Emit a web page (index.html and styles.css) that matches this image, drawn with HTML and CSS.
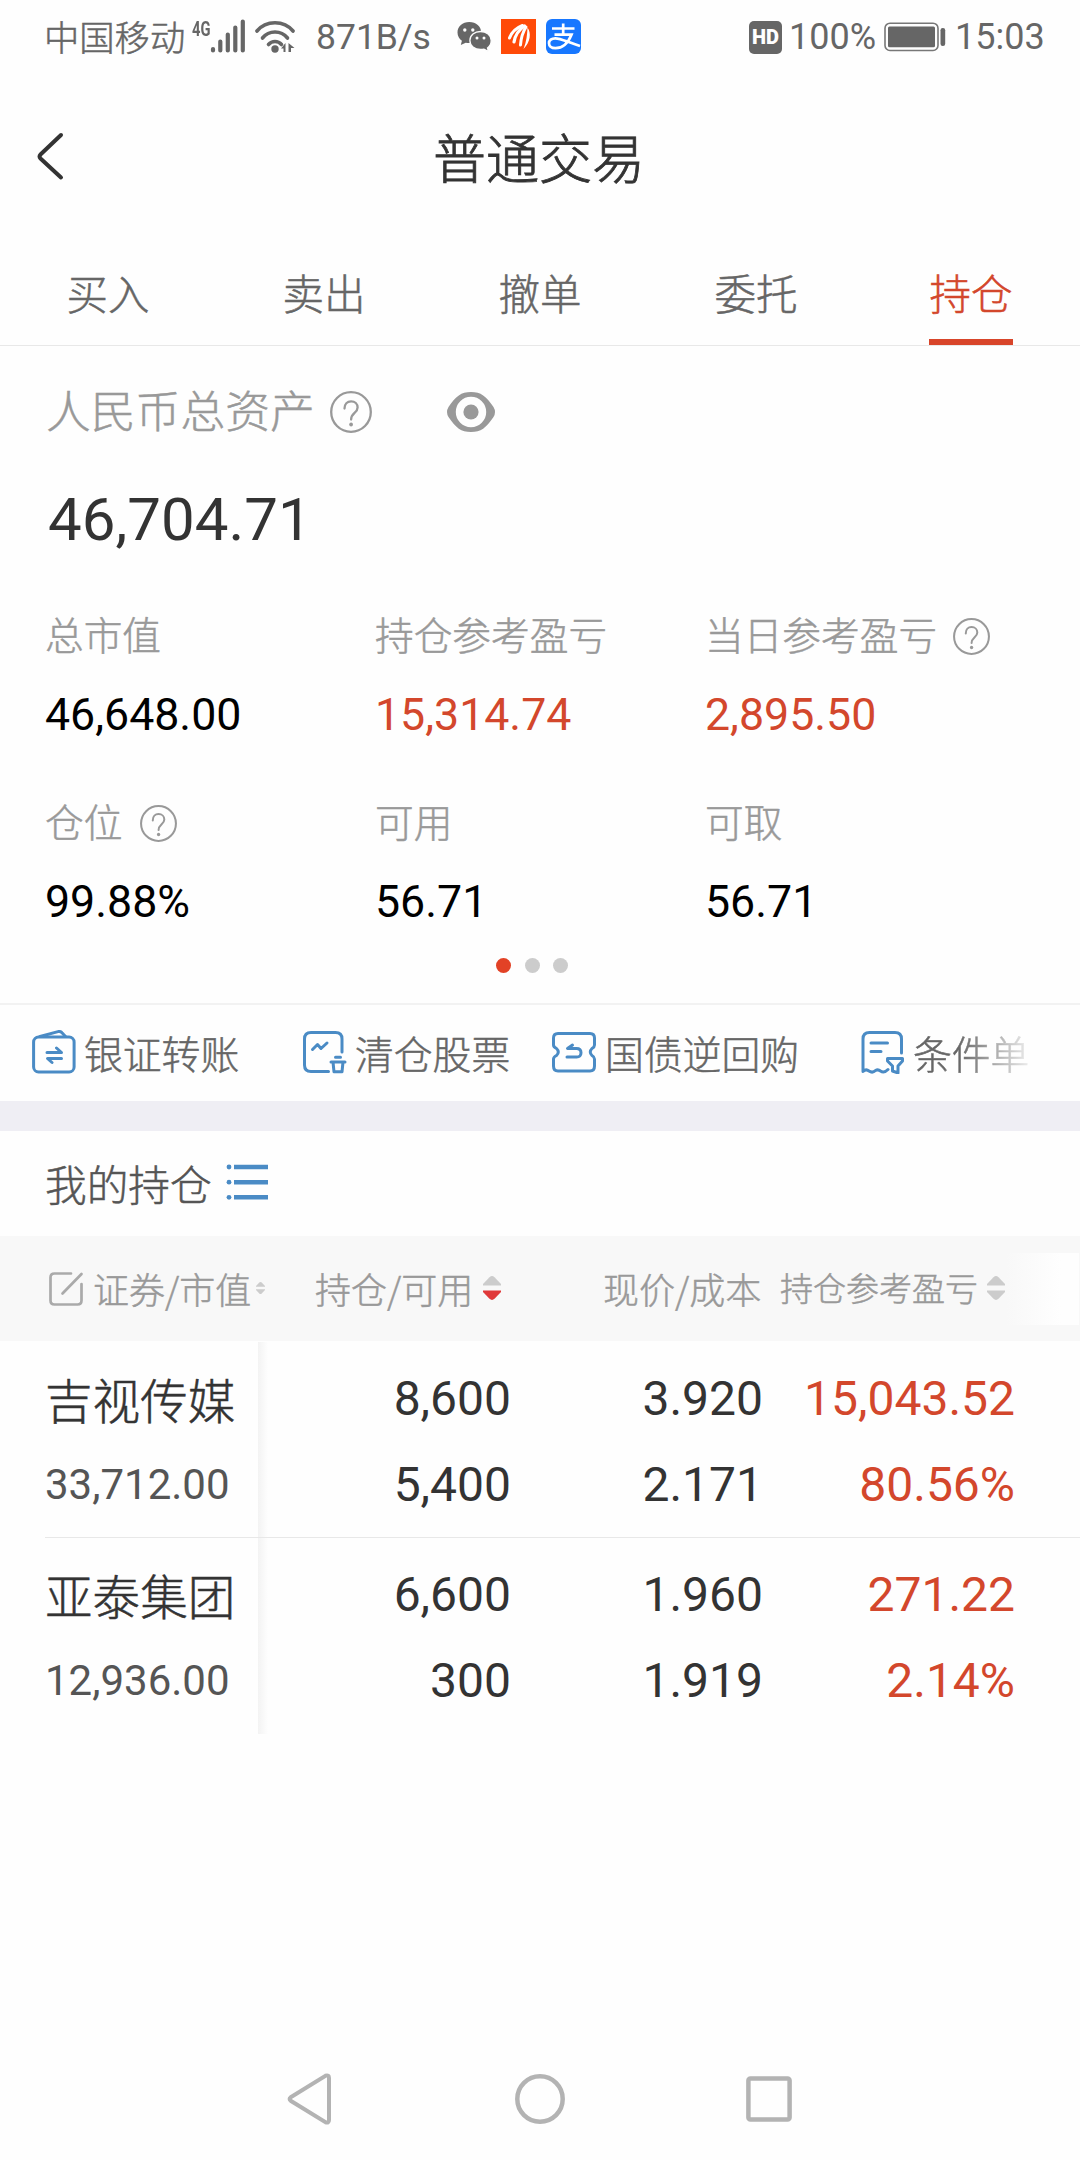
FILE: index.html
```html
<!DOCTYPE html>
<html lang="zh-CN">
<head>
<meta charset="utf-8">
<title>普通交易</title>
<link rel="stylesheet" href="styles.css">
</head>
<body>
<svg class="defs" width="0" height="0">
  <symbol id="help" viewBox="0 0 42 42">
    <g fill="none" stroke="#999" stroke-width="2.3">
      <circle cx="21" cy="21" r="19.8"/>
      <path d="M14.5 17.5c0-4.5 2.8-7.2 6.6-7.2s6.5 2.600 6.500 6.200c0 5.500-6.500 5.500-6.500 12" stroke-linecap="round"/>
    </g>
    <circle cx="21.100" cy="33.500" r="1.900" fill="#999"/>
  </symbol>
  <symbol id="sort" viewBox="0 0 18 24">
    <path class="sort-up" d="M0 9.500V8L6.500 1.200Q9 -1 11.500 1.200L18 8V9.500z"/>
    <path class="sort-down" d="M0 14.500V16L6.500 22.800Q9 25 11.500 22.800L18 16V14.500z"/>
  </symbol>
</svg>

<div class="status">
  <span class="carrier">中国移动</span>
  <span class="net">4G</span>
  <svg class="signal" width="36" height="34" viewBox="0 0 36 34"><path d="M3 31.500V30M10.300 31.500V22.500M17.800 31.500V15.500M25.300 31.500V8.500M32.800 31.500V2.500" stroke="#666" stroke-width="4.200" stroke-linecap="round"/></svg>
  <svg class="wifi" width="40" height="33" viewBox="0 0 40 33"><g fill="none" stroke="#666" stroke-width="3.600" stroke-linecap="round"><path d="M2 11C11 0 29 0 38 11"/><path d="M7.500 18C14 10 26 10 32.500 18"/><path d="M13.500 24.500C17 20.500 23 20.500 26.500 24.500"/></g><circle cx="20" cy="29" r="3.700" fill="#666"/><path d="M26 28.500L30.500 23V32H28.500V28.500zM33.500 23L39.500 28H36V32H33.500z" fill="#666"/></svg>
  <span class="speed">871B/s</span>
  <svg class="wechat" width="35" height="32" viewBox="0 0 35 32"><path d="M12.300 1C5.500 1 .5 5.500.5 11.500c0 3.600 1.800 6.300 4.400 8.300L3.800 24l4.900-2.300c1.200.3 2.400.4 3.600.4 6.800 0 11.900-4.600 11.900-10.600S19.100 1 12.300 1z" fill="#666"/><path d="M23.500 10.500c-6 0-10.600 3.900-10.600 9s4.600 9 10.600 9c1.200 0 2.400-.1 3.500-.4l4.500 2.400-1-3.500c2.300-1.700 3.700-4.500 3.700-7.500 0-5.100-4.700-9-10.700-9z" fill="#666" stroke="#fdfdfd" stroke-width="1.300"/><g fill="#fdfdfd"><circle cx="7.800" cy="9" r="1.700"/><circle cx="15.800" cy="9" r="1.700"/><circle cx="20" cy="17" r="1.500"/><circle cx="27" cy="17" r="1.500"/></g></svg>
  <svg class="appicon" width="35" height="35" viewBox="0 0 35 35"><path fill="#ff4a08" d="M0 0h35v35H0z"/><g fill="none" stroke="#fff" stroke-linecap="round"><path d="M8.500 19C10.500 13.500 15 9 21.500 6.500" stroke-width="3"/><path d="M13 23C14 17 17.500 11 23.500 7" stroke-width="3.200"/><path d="M19.500 26C20 19 21.800 13 25 8" stroke-width="3"/></g><path d="M22.500 30C25.500 23 26.300 15 26.500 8.500 30.500 14 29.500 23 22.500 30z" fill="#fff"/></svg>
  <svg class="appicon alipay" width="35" height="35" viewBox="0 0 35 35"><rect width="35" height="35" rx="6" fill="#1777ff"/><g fill="none" stroke="#fff"><path d="M6 9.500H28.500M17.200 4.500V15.500M8.500 15.700H25.500C22 24 17 29.200 9.500 29.200 5 29.200 3 26.700 3 24.300c0-3 2.500-5 6.300-5C15 19.300 21 23 34 27" stroke-width="2.700"/></g></svg>
  <span class="hd">HD</span>
  <span class="pct">100%</span>
  <svg class="battery" width="62" height="30" viewBox="0 0 62 30"><rect x="1" y="1.200" width="53" height="27.300" rx="5" fill="none" stroke="#777" stroke-width="1.600"/><rect x="4" y="4.500" width="47" height="20.800" rx="1.500" fill="#666"/><rect x="56.500" y="6" width="4.700" height="18" rx="2.200" fill="#666"/></svg>
  <span class="clock">15:03</span>
</div>

<header class="titlebar">
  <svg class="back" width="30" height="50" viewBox="0 0 30 50"><path d="M26 4L5.500 23.500Q3.500 25.500 5.500 27.500L26 46.500" fill="none" stroke="#333" stroke-width="4" stroke-linecap="round"/></svg>
  <h1>普通交易</h1>
</header>

<nav class="tabs">
  <a>买入</a><a>卖出</a><a>撤单</a><a>委托</a><a class="active"><span>持仓</span></a>
</nav>

<section class="assets">
  <div class="total">
    <span class="total-label">人民币总资产</span>
    <svg class="help-lg"><use href="#help"/></svg>
    <svg class="eye" width="48" height="40" viewBox="0 0 48 40"><path fill="#999" fill-rule="evenodd" d="M24 0C34 0 39 4 46.500 15Q49.500 20 46.500 25C39 36 34 40 24 40S9 36 1.500 25Q-1.500 20 1.500 15C9 4 14 0 24 0zM24 4.800a15.200 15.200 0 1 0 0 30.400a15.200 15.200 0 1 0 0-30.400z"/><circle cx="24" cy="20" r="7.600" fill="#999"/></svg>
  </div>
  <div class="amount">46,704.71</div>
  <div class="stats">
    <div class="stat"><div class="label"><span>总市值</span></div><div class="value">46,648.00</div></div>
    <div class="stat"><div class="label"><span>持仓参考盈亏</span></div><div class="value red">15,314.74</div></div>
    <div class="stat"><div class="label"><span>当日参考盈亏</span><svg class="help-sm"><use href="#help"/></svg></div><div class="value red">2,895.50</div></div>
    <div class="stat"><div class="label wide"><span>仓位</span><svg class="help-sm"><use href="#help"/></svg></div><div class="value">99.88%</div></div>
    <div class="stat"><div class="label"><span>可用</span></div><div class="value">56.71</div></div>
    <div class="stat"><div class="label"><span>可取</span></div><div class="value">56.71</div></div>
  </div>
  <div class="dots"><i class="on"></i><i></i><i></i></div>
</section>

<section class="tools">
  <a class="tool tool-bank"><svg width="44" height="44" viewBox="0 0 44 44"><g fill="none" stroke="#4a8bc5" stroke-width="3" stroke-linejoin="round" stroke-linecap="round"><rect x="1.600" y="7" width="40.500" height="35" rx="5"/><path d="M8 6.500L26 1.600Q28.500 1 30 2.800L33.500 6.500M15 22.500H29.500L24.500 18M29.500 28.500H15.500L20 32.500"/></g></svg><span>银证转账</span></a>
  <a class="tool tool-clear"><svg width="44" height="44" viewBox="0 0 44 44"><g fill="none" stroke="#4a8bc5" stroke-width="3" stroke-linejoin="round" stroke-linecap="round"><path d="M39 22V9Q39 2.500 32.500 2.500H8Q1.500 2.500 1.500 9V35Q1.500 41.500 8 41.500H25.500M9.500 19.500L14.500 14.500L18 18.500L24 13M28 32H42M32.500 27.300H37.500M30 32L31 41.800H39L40 32"/></g></svg><span>清仓股票</span></a>
  <a class="tool tool-bond"><svg width="44" height="44" viewBox="0 0 44 44"><g fill="none" stroke="#4a8bc5" stroke-width="3" stroke-linejoin="round" stroke-linecap="round"><path d="M1.500 8Q1.500 3.500 6 3.500H38Q42.500 3.500 42.500 8V15Q42.500 17 40 18.500Q36.500 22 40 25.500Q42.500 27 42.500 29V36Q42.500 41 38 41H6Q1.500 41 1.500 36V29Q1.500 27 4.500 25.500Q8 22 4.500 18.500Q1.500 17 1.500 15zM20.500 15L15.500 18.500H24.500Q29 18.500 29 22.800T24.500 27H15"/></g></svg><span>国债逆回购</span></a>
  <a class="tool tool-cond"><svg width="44" height="44" viewBox="0 0 44 44"><g fill="none" stroke="#4a8bc5" stroke-width="3" stroke-linejoin="round" stroke-linecap="round"><path d="M40.500 23V9Q40.500 2.500 34 2.500H8.500Q2 2.500 2 9V41.500Q5 38.500 8 41Q11.500 43.500 14.500 40.500Q17 39 19.500 41Q23 43.500 27 39.500M10 13H26.500M10 21.500H20M26.500 28.500H41.500V31L37 36V43L31.500 41V36L26.500 31z"/></g></svg><span>条件单</span></a>
</section>

<section class="holdings-title">
  <h2>我的持仓</h2>
  <svg width="42" height="36" viewBox="0 0 42 36"><path d="M8 3H42M8 18.200H42M8 33.300H42" stroke="#4a8bc5" stroke-width="4.600"/><g fill="#4a8bc5"><circle cx="3" cy="3" r="2.400"/><circle cx="3" cy="18.200" r="2.400"/><circle cx="3" cy="33.300" r="2.400"/></g></svg>
</section>

<section class="table">
  <div class="thead">
    <svg class="edit" width="36" height="36" viewBox="0 0 36 36"><path d="M23 2.500H6.500Q2.500 2.500 2.500 6.500V29.500Q2.500 33.500 6.500 33.500H29.500Q33.500 33.500 33.500 29.500V13M14.500 22.500L33.500 3" fill="none" stroke="#aaa" stroke-width="2.700" stroke-linecap="round"/></svg>
    <span class="th th-name">证券/市值</span><svg class="sort sort-sm"><use href="#sort"/></svg>
    <span class="th th-qty">持仓/可用</span><svg class="sort desc"><use href="#sort"/></svg>
    <span class="th th-price">现价/成本</span>
    <span class="th th-profit">持仓参考盈亏</span><svg class="sort"><use href="#sort"/></svg>
    <div class="more"></div>
  </div>
  <div class="rows">
    <div class="row">
      <div class="name"><b>吉视传媒</b><small>33,712.00</small></div>
      <div class="num">8,600<br>5,400</div>
      <div class="num">3.920<br>2.171</div>
      <div class="num red">15,043.52<br>80.56%</div>
    </div>
    <div class="row">
      <div class="name"><b>亚泰集团</b><small>12,936.00</small></div>
      <div class="num">6,600<br>300</div>
      <div class="num">1.960<br>1.919</div>
      <div class="num red">271.22<br>2.14%</div>
    </div>
  </div>
</section>

<footer class="sysnav">
  <svg width="46" height="52" viewBox="0 0 46 52"><path d="M3.700 24.200L38.500 2.700Q42 1.500 42 5V47Q42 50.500 38.500 49.300L3.700 27.800Q1.500 26 3.700 24.200z" fill="none" stroke="#b3b3b3" stroke-width="4"/></svg>
  <svg width="52" height="52" viewBox="0 0 52 52"><circle cx="26" cy="26" r="22.700" fill="none" stroke="#b3b3b3" stroke-width="4.500"/></svg>
  <svg width="48" height="46" viewBox="0 0 48 46"><rect x="2.400" y="2.400" width="41.200" height="41.200" rx="2" fill="none" stroke="#b3b3b3" stroke-width="4.500"/></svg>
</footer>
</body>
</html>
```
FILE: styles.css
```css
* { box-sizing: border-box; }
body {
  margin: 0;
  width: 1080px;
  height: 2160px;
  display: flex;
  flex-direction: column;
  overflow: hidden;
  background: #fefefe;
  color: #333;
  font-family: "Noto Sans CJK SC", sans-serif;
  font-weight: 300;
  -webkit-text-stroke: .5px currentColor;
}
svg { display: block; flex: none; }
.defs { position: absolute; }
span, h1, h2, a, b, small { white-space: nowrap; }
.red { color: #d3472c !important; }
.net, .speed, .pct, .clock, .hd, .amount, .value, .num, .name small { -webkit-text-stroke: 0; }

.status { height: 74px; flex: none; display: flex; align-items: center; color: #666; padding-left: 44px; }
.carrier { width: 148px; font-size: 35.300px; line-height: 50px; margin-bottom: 3px; }
.net { width: 18px; height: 34px; font: 700 21px/18px Roboto, sans-serif; transform: scaleX(.7); transform-origin: 0 0; }
.signal { margin-top: -2px; }
.wifi { margin: -2px 0 0 9px; }
.speed, .pct, .clock { font: 400 36px/50px Roboto, sans-serif; }
.speed { width: 117px; margin-left: 21px; font-size: 35.500px; }
.wechat { margin-left: 24px; }
.wechat + .appicon { margin-left: 9px; }
.appicon { margin-top: -1px; }
.alipay { margin-left: 10px; }
.hd { margin: 0 7px 0 168px; width: 33px; height: 33px; border-radius: 5px; background: #666; color: #fff; font: 900 20px/33px Roboto, sans-serif; text-align: center; }
.pct { width: 90px; }
.battery { margin-left: 5px; margin-top: -1px; }
.clock { margin-left: 9px; }

.titlebar { height: 162px; flex: none; display: grid; grid-template-columns: 100px 1fr 100px; align-items: center; }
.back { margin-left: 35px; margin-top: 2px; }
h1 { margin: 2px 0 0; padding-right: 2px; text-align: center; font-size: 53px; line-height: 80px; font-weight: 300; -webkit-text-stroke-width: .8px; }

.tabs { height: 110px; flex: none; display: flex; border-bottom: 1px solid #e8e8e8; color: #666; font-size: 41.500px; line-height: 112px; text-align: center; }
.tabs a { width: 216px; flex: none; }
.tabs .active { width: 214px; color: #d3472c; }
.active span { display: inline-block; width: 84px; height: 109px; border-bottom: 6px solid #d8452a; }

.assets { flex: none; height: 657px; }
.total { height: 132px; display: flex; align-items: center; padding-left: 46px; color: #999; }
.total-label { width: 284px; font-size: 44.800px; line-height: 66px; margin-bottom: 6px; }
.help-lg { width: 42px; height: 42px; }
.eye { margin-left: 75px; }
.amount { padding-left: 48px; font: 400 60px/83px Roboto, sans-serif; }
.stats { display: grid; grid-template-columns: repeat(3, 330px); row-gap: 28px; padding-left: 45px; margin-top: 39px; }
.label { height: 72px; display: flex; align-items: center; gap: 16px; color: #999; font-size: 38.700px; line-height: 58px; }
.label.wide { gap: 18px; }
.label span { margin-bottom: 6px; }
.help-sm { width: 37px; height: 37px; }
.value { color: #000; font: 400 44.700px/87px Roboto, sans-serif; }
.dots { display: flex; gap: 13.500px; padding: 12px 0 0 496px; }
.dots i { width: 15px; height: 15px; border-radius: 50%; background: #ccc; }
.dots .on { background: #e24226; }

.tools { flex: none; height: 98px; border-top: 2px solid #f2f2f2; display: flex; align-items: center; padding-left: 32px; font-size: 38.800px; line-height: 58px; color: #666; }
.tool { display: flex; align-items: center; gap: 8px; flex: none; }
.tool span { margin-bottom: 3px; }
.tool svg { margin-bottom: 2px; }
.tool-bank { width: 271px; }
.tool-clear { width: 249px; }
.tool-bond { width: 309px; gap: 9px; }
.tool-cond span { background: linear-gradient(90deg, #666 45px, #f0f0f0 118px); -webkit-background-clip: text; background-clip: text; color: transparent; }

.holdings-title { flex: none; height: 135px; border-top: 30px solid #efeef4; display: flex; align-items: center; padding-left: 45px; }
h2 { margin: 0 13px 1px 0; width: 168px; font-size: 41.700px; line-height: 60px; font-weight: 300; color: #555; }
.holdings-title svg { margin-bottom: 3px; }

.thead { height: 105px; background: #f8f8f8; display: flex; align-items: center; padding-left: 48px; color: #999; }
.th { flex: none; font-size: 36px; line-height: 54px; margin-bottom: 1px; }
.th-name { width: 163px; margin-left: 9px; }
.th-qty { width: 168px; margin-left: 50px; }
.th-price { width: 160px; margin-left: 102px; }
.th-profit { width: 207px; margin-left: 17px; margin-bottom: 3px; font-size: 33px; }
.sort { width: 18px; height: 24px; fill: #ccc; margin-bottom: 2px; }
.sort-sm { width: 9px; height: 12px; }
.desc { --down: #e0393a; }
.sort-down { fill: var(--down, #ccc); }
.more { width: 73px; height: 72px; margin-left: 1px; background: linear-gradient(90deg, #f8f8f8, #fefefe 75%); }

.rows { padding-top: 1px; }
.row { height: 196px; display: grid; grid-template-columns: 258px 253px 252px 252px; padding-top: 14px; line-height: 86px; background: linear-gradient(#e8e8e8, #e8e8e8) 45px 100% / 1035px 1px no-repeat, linear-gradient(90deg, #f3f3f3, #fefefe) 258px 0 / 10px 100% no-repeat; }
.row:last-child { background-size: 0 0, 10px 100%; }
.name { padding-left: 45px; }
.name b { display: block; height: 86px; font-size: 47.600px; font-weight: 300; }
.name small { display: block; font: 400 42px/85px Roboto, sans-serif; color: #555; }
.num { font: 400 48px/86px Roboto, sans-serif; text-align: right; }

.sysnav { margin-top: auto; height: 122px; flex: none; display: grid; grid-template-columns: 230px 230px 230px; justify-content: center; justify-items: center; align-items: center; }
```
